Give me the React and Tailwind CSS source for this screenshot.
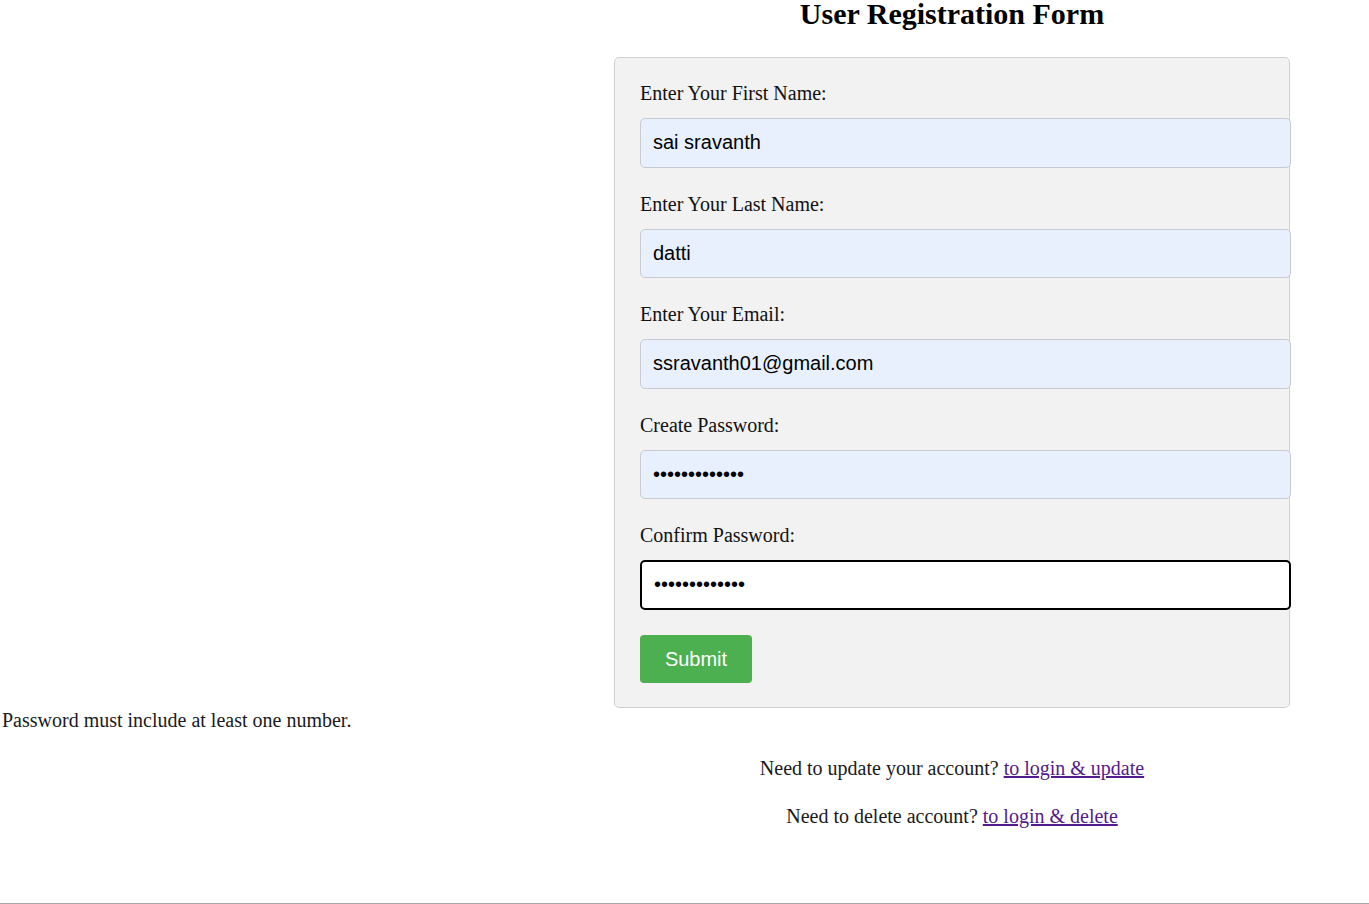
import React from "react";

function Field({ label, value, type = "text", focused = false, last = false }) {
  return (
    <div className={last ? "mb-[25px]" : "mb-[26px]"}>
      <label className="block text-[20px] leading-[20px] mb-[15px] text-[#111]">{label}</label>
      <input
        type={type}
        readOnly
        value={value}
        className={
          "block w-[651px] h-[49.5px] px-[12px] rounded-[5px] text-[20px] text-black outline-none " +
          (focused
            ? "bg-white border-2 border-black"
            : "bg-[#e8f0fe] border border-[#c8ccd2]")
        }
        style={{ fontFamily: '"Liberation Sans", Arial, sans-serif' }}
      />
    </div>
  );
}

export default function App() {
  return (
    <div
      className="w-full h-[904px] bg-white border-b border-[#a9a9a9] overflow-hidden text-[#1a1a1a]"
      style={{ fontFamily: '"Liberation Serif", "Times New Roman", serif' }}
    >
      <div className="grid grid-cols-[614px_676px]">
        <div />
        <div className="flex flex-col items-center">
          <h1 className="text-[30px] font-bold leading-[28px] mb-[29px] text-black whitespace-nowrap">
            User Registration Form
          </h1>
          <div className="w-[676px] bg-[#f2f2f2] border border-[#d0d0d0] rounded-[5px] px-[25px] pt-[25px] pb-[24px]">
            <Field label="Enter Your First Name:" value="sai sravanth" />
            <Field label="Enter Your Last Name:" value="datti" />
            <Field label="Enter Your Email:" value="ssravanth01@gmail.com" />
            <Field label="Create Password:" value="sravanth12345" type="password" />
            <Field label="Confirm Password:" value="sravanth12345" type="password" focused last />
            <button
              className="block w-[112px] h-[48px] bg-[#4caf50] text-white text-[20px] rounded-[4px]"
              style={{ fontFamily: '"Liberation Sans", Arial, sans-serif' }}
            >
              Submit
            </button>
          </div>
        </div>
        <div className="pl-[2px] pt-[1px] text-[20px] leading-[22px] whitespace-nowrap">
          Password must include at least one number.
        </div>
        <div />
        <div />
        <div className="flex flex-col items-center text-[20px] leading-[22px]">
          <p className="mt-[26px] whitespace-nowrap">
            Need to update your account?{" "}
            <a href="#" className="text-[#551a8b] underline">to login &amp; update</a>
          </p>
          <p className="mt-[26px] whitespace-nowrap">
            Need to delete account?{" "}
            <a href="#" className="text-[#551a8b] underline">to login &amp; delete</a>
          </p>
        </div>
      </div>
    </div>
  );
}
